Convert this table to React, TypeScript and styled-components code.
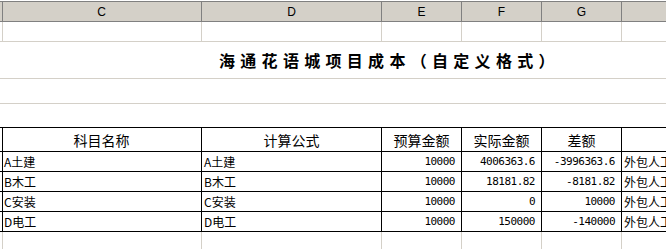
import React from 'react';
import styled, { createGlobalStyle } from 'styled-components';

const GlobalStyle = createGlobalStyle`
  html, body {
    margin: 0;
    padding: 0;
    background: #ffffff;
  }
  body {
    font-family: "Noto Sans CJK SC", sans-serif;
    overflow: hidden;
  }
`;

const COLS = '2px 200px 180px 80px 80px 80px 200px';
const GRID = '#d4d0c8';
const HEAD_LINE = '#808080';

const Sheet = styled.div`
  width: 666px;
  height: 249px;
  padding-top: 1px;
  box-sizing: border-box;
  overflow: hidden;
  display: flex;
  flex-direction: column;
`;

const Row = styled.div<{ $h: number; $line: string; $top?: boolean }>`
  flex: none;
  display: grid;
  grid-template-columns: ${COLS};
  height: ${(p) => p.$h}px;
  box-sizing: border-box;
  border-bottom: 1px solid ${(p) => p.$line};
  border-top: ${(p) => (p.$top ? `1px solid ${p.$line}` : 'none')};
`;

const ColHeadRow = styled(Row)`
  background: #d4d0c8;
`;

const Cell = styled.div<{ $line: string; $align?: 'left' | 'center' | 'right' }>`
  box-sizing: border-box;
  border-right: 1px solid ${(p) => p.$line};
  display: flex;
  align-items: center;
  justify-content: ${(p) =>
    p.$align === 'right' ? 'flex-end' : p.$align === 'center' ? 'center' : 'flex-start'};
  padding: ${(p) => (p.$align === 'right' ? '0 6px 0 0' : p.$align === 'center' ? '0' : '0 0 0 2px')};
  white-space: nowrap;
  overflow: hidden;
  min-width: 0;
`;

const ColLetter = styled(Cell)`
  font-family: "Liberation Sans", Arial, sans-serif;
  font-size: 12px;
  color: #000;
`;

const Band = styled.div<{ $h: number; $border?: boolean }>`
  flex: none;
  height: ${(p) => p.$h}px;
  box-sizing: border-box;
  border-bottom: ${(p) => (p.$border ? `1px solid ${GRID}` : 'none')};
  display: flex;
  align-items: center;
`;

const Title = styled.h1`
  margin: 0 0 0 219px;
  font-family: "Noto Sans CJK SC", sans-serif;
  font-size: 16px;
  font-weight: 700;
  letter-spacing: 5.3px;
  line-height: 20px;
  color: #000;
  white-space: nowrap;
`;

const TableHead = styled(Cell)`
  font-size: 14px;
  color: #000;
`;

const TextCell = styled(Cell)`
  font-size: 12px;
  color: #000;
`;

const NumCell = styled(Cell)`
  font-family: "DejaVu Sans Mono", monospace;
  font-size: 11px;
  letter-spacing: -0.5px;
  color: #000;
`;

const letters = ['C', 'D', 'E', 'F', 'G', ''];

const heads = ['科目名称', '计算公式', '预算金额', '实际金额', '差额', ''];

const rows = [
  { name: 'A土建', formula: 'A土建', budget: '10000', actual: '4006363.6', diff: '-3996363.6' },
  { name: 'B木工', formula: 'B木工', budget: '10000', actual: '18181.82', diff: '-8181.82' },
  { name: 'C安装', formula: 'C安装', budget: '10000', actual: '0', diff: '10000' },
  { name: 'D电工', formula: 'D电工', budget: '10000', actual: '150000', diff: '-140000' },
];

const GridRow: React.FC = () => (
  <Row $h={20} $line={GRID}>
    {Array.from({ length: 7 }).map((_, i) => (
      <Cell key={i} $line={GRID} />
    ))}
  </Row>
);

export default function App() {
  return (
    <>
      <GlobalStyle />
      <Sheet>
        <ColHeadRow $h={21} $line={HEAD_LINE} $top>
          <Cell $line={HEAD_LINE} />
          {letters.map((l, i) => (
            <ColLetter key={i} $line={HEAD_LINE} $align="center">
              {l}
            </ColLetter>
          ))}
        </ColHeadRow>
        <GridRow />
        <Band $h={37} $border>
          <Title>海通花语城项目成本（自定义格式）</Title>
        </Band>
        <Band $h={25} $border />
        <Band $h={23} />
        <Row $h={25} $line="#000" $top>
          <Cell $line="#000" />
          {heads.map((h, i) => (
            <TableHead key={i} $line="#000" $align="center">
              {h}
            </TableHead>
          ))}
        </Row>
        {rows.map((r) => (
          <Row key={r.name} $h={20} $line="#000">
            <Cell $line="#000" />
            <TextCell $line="#000">{r.name}</TextCell>
            <TextCell $line="#000">{r.formula}</TextCell>
            <NumCell $line="#000" $align="right">{r.budget}</NumCell>
            <NumCell $line="#000" $align="right">{r.actual}</NumCell>
            <NumCell $line="#000" $align="right">{r.diff}</NumCell>
            <TextCell $line="#000">外包人工费用</TextCell>
          </Row>
        ))}
        <GridRow />
      </Sheet>
    </>
  );
}
